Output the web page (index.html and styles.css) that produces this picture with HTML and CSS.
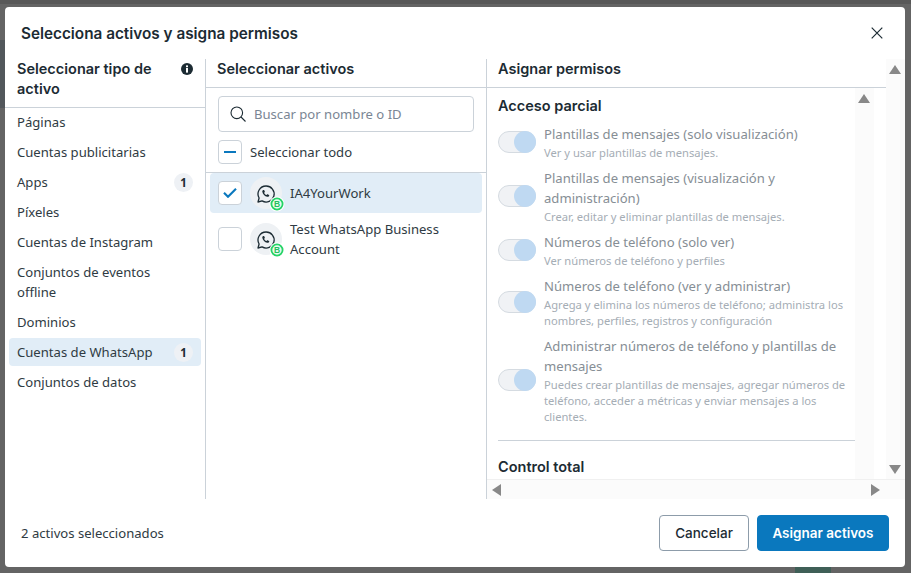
FILE: index.html
```html
<!DOCTYPE html>
<html lang="es">
<head>
    <meta charset="UTF-8">
    <meta name="viewport" content="width=device-width, initial-scale=1.0">
    <title>Selecciona activos y asigna permisos</title>
    <link rel="stylesheet" href="styles.css">
</head>
<body>
    <div class="backdrop-top"></div>
    <div class="backdrop-side"></div>
    <div class="backdrop-green"></div>

    <div class="modal">
        <header class="modal-head">
            <h1>Selecciona activos y asigna permisos</h1>
            <svg class="close" width="12" height="12" viewBox="0 0 12 12"><path d="M.7.7l10.600 10.600M11.300.7L.7 11.300" stroke="#1c2b33" stroke-width="1.200"/></svg>
        </header>

        <div class="columns">
            <section class="col col-types">
                <div class="types-head">
                    <h2>Seleccionar tipo de activo</h2>
                    <svg class="info" width="12" height="12" viewBox="0 0 12 12"><circle cx="6" cy="6" r="6" fill="#1c2b33"/><rect x="5" y="5" width="2" height="4.600" fill="#fff"/><rect x="5" y="2.400" width="2" height="1.800" fill="#fff"/></svg>
                </div>
                <ul class="types">
                    <li>Páginas</li>
                    <li>Cuentas publicitarias</li>
                    <li>Apps <span class="badge">1</span></li>
                    <li>Píxeles</li>
                    <li>Cuentas de Instagram</li>
                    <li><span>Conjuntos de eventos<br>offline</span></li>
                    <li>Dominios</li>
                    <li class="active">Cuentas de WhatsApp <span class="badge">1</span></li>
                    <li>Conjuntos de datos</li>
                </ul>
            </section>

            <section class="col col-assets">
                <h2 class="col-head">Seleccionar activos</h2>
                <div class="search">
                    <svg width="16" height="16" viewBox="0 0 16 16"><circle cx="6.800" cy="6.800" r="5.800" fill="none" stroke="#1c2b33" stroke-width="1.100"/><path d="M11 11l4.500 4.500" stroke="#1c2b33" stroke-width="1.100"/></svg>
                    <span>Buscar por nombre o ID</span>
                </div>
                <div class="select-all">
                    <span class="check"><i class="dash"></i></span>
                    Seleccionar todo
                </div>
                <div class="asset selected">
                    <span class="check">
                        <svg width="14" height="10" viewBox="0 0 14 10"><path d="M1 4.800l4 4 8-8" fill="none" stroke="#0a78be" stroke-width="2.100"/></svg>
                    </span>
                    <svg class="avatar" width="36" height="36" viewBox="0 0 36 36">
                        <circle cx="16" cy="16" r="16" fill="#eef1f4"/>
                        <path d="M16 9a8 8 0 0 0-6.900 12L8 25l4.100-1.100A8 8 0 1 0 16 9z" fill="none" stroke="#1c2b33" stroke-width="1.300" stroke-linejoin="round"/>
                        <path d="M13.300 12.900c-.7.300-1.100 1-1 1.900.4 2.400 2.500 4.600 4.900 5 1 .2 1.800-.3 2-1.100.1-.3 0-.5-.2-.6l-1.400-.8c-.2-.1-.4 0-.6.100l-.5.700c-1.100-.4-2-1.300-2.400-2.400l.6-.5c.2-.2.200-.4.100-.6l-.7-1.500c-.1-.2-.4-.3-.8-.1z" fill="#1c2b33"/>
                        <circle cx="27" cy="27" r="7.500" fill="#fff"/>
                        <circle cx="27" cy="27" r="5.600" fill="#eafbf0" stroke="#25d366" stroke-width="1.800"/>
                        <text x="27" y="30" text-anchor="middle" class="wa-b">B</text>
                    </svg>
                    <span>IA4YourWork</span>
                </div>
                <div class="asset">
                    <span class="check"></span>
                    <svg class="avatar" width="36" height="36" viewBox="0 0 36 36">
                        <circle cx="16" cy="16" r="16" fill="#eef1f4"/>
                        <path d="M16 9a8 8 0 0 0-6.900 12L8 25l4.100-1.100A8 8 0 1 0 16 9z" fill="none" stroke="#1c2b33" stroke-width="1.300" stroke-linejoin="round"/>
                        <path d="M13.300 12.900c-.7.300-1.100 1-1 1.900.4 2.400 2.500 4.600 4.900 5 1 .2 1.800-.3 2-1.100.1-.3 0-.5-.2-.6l-1.400-.8c-.2-.1-.4 0-.6.100l-.5.700c-1.100-.4-2-1.300-2.400-2.400l.6-.5c.2-.2.200-.4.100-.6l-.7-1.500c-.1-.2-.4-.3-.8-.1z" fill="#1c2b33"/>
                        <circle cx="27" cy="27" r="7.500" fill="#fff"/>
                        <circle cx="27" cy="27" r="5.600" fill="#eafbf0" stroke="#25d366" stroke-width="1.800"/>
                        <text x="27" y="30" text-anchor="middle" class="wa-b">B</text>
                    </svg>
                    <span>Test WhatsApp Business Account</span>
                </div>
            </section>

            <section class="col col-perms">
                <div class="perms-main">
                    <h2 class="col-head">Asignar permisos</h2>
                    <div class="perms-body">
                        <div class="perms-list">
                            <h3>Acceso parcial</h3>
                            <div class="perm">
                                <span class="toggle"></span>
                                <div>
                                    <div class="perm-title">Plantillas de mensajes (solo visualización)</div>
                                    <div class="perm-desc">Ver y usar plantillas de mensajes.</div>
                                </div>
                            </div>
                            <div class="perm">
                                <span class="toggle"></span>
                                <div>
                                    <div class="perm-title">Plantillas de mensajes (visualización y administración)</div>
                                    <div class="perm-desc">Crear, editar y eliminar plantillas de mensajes.</div>
                                </div>
                            </div>
                            <div class="perm">
                                <span class="toggle"></span>
                                <div>
                                    <div class="perm-title">Números de teléfono (solo ver)</div>
                                    <div class="perm-desc">Ver números de teléfono y perfiles</div>
                                </div>
                            </div>
                            <div class="perm">
                                <span class="toggle"></span>
                                <div>
                                    <div class="perm-title">Números de teléfono (ver y administrar)</div>
                                    <div class="perm-desc">Agrega y elimina los números de teléfono; administra los nombres, perfiles, registros y configuración</div>
                                </div>
                            </div>
                            <div class="perm">
                                <span class="toggle"></span>
                                <div>
                                    <div class="perm-title">Administrar números de teléfono y plantillas de mensajes</div>
                                    <div class="perm-desc">Puedes crear plantillas de mensajes, agregar números de teléfono, acceder a métricas y enviar mensajes a los clientes.</div>
                                </div>
                            </div>
                            <hr>
                            <h3>Control total</h3>
                        </div>
                        <div class="vbar inner"><i class="tri up"></i></div>
                    </div>
                    <div class="vbar outer"><i class="tri up"></i><i class="tri down"></i></div>
                </div>
                <div class="hbar"><i class="tri left"></i><i class="tri right"></i></div>
            </section>
        </div>

        <footer class="modal-foot">
            <span>2 activos seleccionados</span>
            <div class="actions">
                <button class="btn">Cancelar</button>
                <button class="btn primary">Asignar activos</button>
            </div>
        </footer>
    </div>
</body>
</html>
```

FILE: styles.css
```css
* {
    box-sizing: border-box;
}
html, body {
    height: 100%;
}
body {
    margin: 0;
    padding: 7px 6px 6px 5px;
    overflow: hidden;
    background-color: #646464;
    font-family: "Noto Sans", Roboto, sans-serif;
    font-size: 13.1px;
    color: #2f3b43;
}
.wa-b {
    font-family: "Liberation Sans", sans-serif;
    font-size: 8.5px;
    font-weight: bold;
    fill: #25c15f;
}

/* page behind the dialog */
.backdrop-top {
    position: absolute;
    top: 0;
    left: 0;
    right: 0;
    height: 4px;
    background-color: #585858;
}
.backdrop-side {
    position: absolute;
    top: 40px;
    left: 0;
    width: 5px;
    height: 68px;
    background-color: #52575b;
}
.backdrop-green {
    position: absolute;
    bottom: 0;
    left: 795px;
    width: 36px;
    height: 6px;
    background-color: #3f5f57;
}

.modal {
    position: relative;
    display: flex;
    flex-direction: column;
    height: 560px;
    background-color: #fff;
    border-radius: 4px;
}
.modal-head {
    display: flex;
    align-items: center;
    justify-content: space-between;
    height: 52px;
    padding: 0 22px 0 16px;
}
h1, h2, h3 {
    margin: 0;
    font-family: Inter, Roboto, sans-serif;
    font-weight: 600;
    color: #1c2b33;
}
h1 {
    font-size: 15.300px;
}
h2, h3 {
    font-size: 14.500px;
    line-height: 20px;
}

.columns {
    display: flex;
    height: 440px;
}
.col {
    flex: none;
}
.col-types {
    width: 201px;
    border-right: 1px solid #cbd2d9;
}
.col-assets {
    width: 281px;
    border-right: 1px solid #cbd2d9;
}
.col-perms {
    display: flex;
    flex-direction: column;
    width: 418px;
}

.types-head {
    display: flex;
    align-items: flex-start;
    justify-content: space-between;
    height: 49px;
    padding: 0 12px;
    border-bottom: 1px solid #cbd2d9;
}
.types-head h2 {
    width: 150px;
}
.info {
    margin-top: 4px;
}
.types {
    margin: 0;
    padding: 0;
    list-style: none;
}
.types li {
    display: flex;
    align-items: center;
    justify-content: space-between;
    min-height: 28px;
    margin: 0 4px 2px;
    padding: 4px 8px;
    line-height: 20px;
    border-radius: 4px;
}
.types li.active {
    background-color: #e1edf7;
}
.badge {
    flex: none;
    width: 19px;
    height: 19px;
    border-radius: 50%;
    background-color: #eef1f5;
    font-size: 11.5px;
    font-weight: 700;
    line-height: 19px;
    text-align: center;
    color: #1c2b33;
}

.col-head {
    height: 29px;
    padding: 0 11px;
    border-bottom: 1px solid #cbd2d9;
}
.search {
    display: flex;
    align-items: center;
    gap: 8px;
    height: 36px;
    margin: 8px 12px 0;
    padding: 0 11px;
    border: 1px solid #cbd2d9;
    border-radius: 4px;
}
.search svg {
    flex: none;
}
.search span {
    color: #7a8694;
}
.check {
    flex: none;
    display: flex;
    align-items: center;
    justify-content: center;
    width: 24px;
    height: 24px;
    background-color: #fff;
    border: 1px solid #cbd2d9;
    border-radius: 4px;
}
.dash {
    width: 12px;
    height: 2px;
    background-color: #0a78be;
}
.select-all {
    display: flex;
    align-items: center;
    gap: 8px;
    height: 41px;
    padding: 0 12px;
    border-bottom: 1px solid #cbd2d9;
}
.asset {
    display: flex;
    align-items: center;
    gap: 8px;
    width: 272px;
    min-height: 40px;
    margin: 0 4px;
    padding: 4px 8px;
    line-height: 20px;
    border-radius: 4px;
}
.asset.selected {
    background-color: #e1edf7;
}
.asset + .asset {
    min-height: 52px;
    padding: 6px 8px;
}
.avatar {
    flex: none;
    margin: 0 -4px -4px 0;
}

.perms-main {
    position: relative;
    height: 420px;
}
.perms-main .col-head {
    width: 399px;
}
.perms-body {
    display: flex;
    width: 387px;
    height: 391px;
}
.perms-list {
    width: 368px;
    padding: 8px 0 0 11px;
    overflow: hidden;
}
.perms-list h3 {
    margin-bottom: 8px;
}
.perm {
    display: flex;
    align-items: center;
    gap: 8px;
    margin-bottom: 7px;
    padding-right: 6px;
}
.perm > div {
    flex: 1;
    min-width: 0;
}
.toggle {
    position: relative;
    flex: none;
    width: 38px;
    height: 22px;
    margin-bottom: 1px;
    background-color: #f0f2f5;
    border: 1px solid #d5dbe1;
    border-radius: 11px;
}
.toggle::after {
    content: "";
    position: absolute;
    top: -1px;
    right: -1px;
    width: 22px;
    height: 22px;
    border-radius: 50%;
    background-color: #bfd9f2;
}
.perm-title {
    line-height: 20px;
    color: #868e95;
}
.perm-desc {
    margin-top: 1px;
    font-size: 11.200px;
    line-height: 16px;
    color: #a5adb5;
}
hr {
    height: 1px;
    margin: 15px 0 16px;
    border: none;
    background-color: #cbd2d9;
}

/* scrollbars */
.vbar {
    position: relative;
    background-color: #fbfbfb;
}
.vbar.inner {
    flex: none;
    width: 19px;
}
.vbar.outer {
    position: absolute;
    top: 0;
    right: 0;
    width: 19px;
    height: 420px;
}
.hbar {
    position: relative;
    height: 20px;
    background-color: #fbfbfb;
    border-top: 1px solid #f0f0f0;
}
.tri {
    position: absolute;
    width: 0;
    height: 0;
    border: 5px solid transparent;
}
.tri.up {
    top: 6px;
    left: 3px;
    border-width: 0 6.500px 9px;
    border-bottom-color: #888;
}
.tri.down {
    bottom: 5px;
    left: 3px;
    border-width: 9px 6.500px 0;
    border-top-color: #888;
}
.tri.left {
    top: 4px;
    left: 5px;
    border-width: 6px 9px 6px 0;
    border-right-color: #888;
}
.tri.right {
    top: 4px;
    left: 384px;
    border-width: 6px 0 6px 9px;
    border-left-color: #888;
}

.modal-foot {
    display: flex;
    align-items: center;
    justify-content: space-between;
    flex: 1;
    padding: 0 16px;
}
.actions {
    display: flex;
    gap: 8px;
}
.btn {
    height: 36px;
    padding: 0 15px;
    background-color: #fff;
    border: 1px solid #8d9caa;
    border-radius: 4px;
    font-family: Inter, Roboto, sans-serif;
    font-size: 13.500px;
    font-weight: 500;
    color: #1c2b33;
}
.btn.primary {
    padding: 0 14.500px;
    background-color: #0a78be;
    border-color: #0a78be;
    color: #fff;
    font-weight: 600;
}
```
